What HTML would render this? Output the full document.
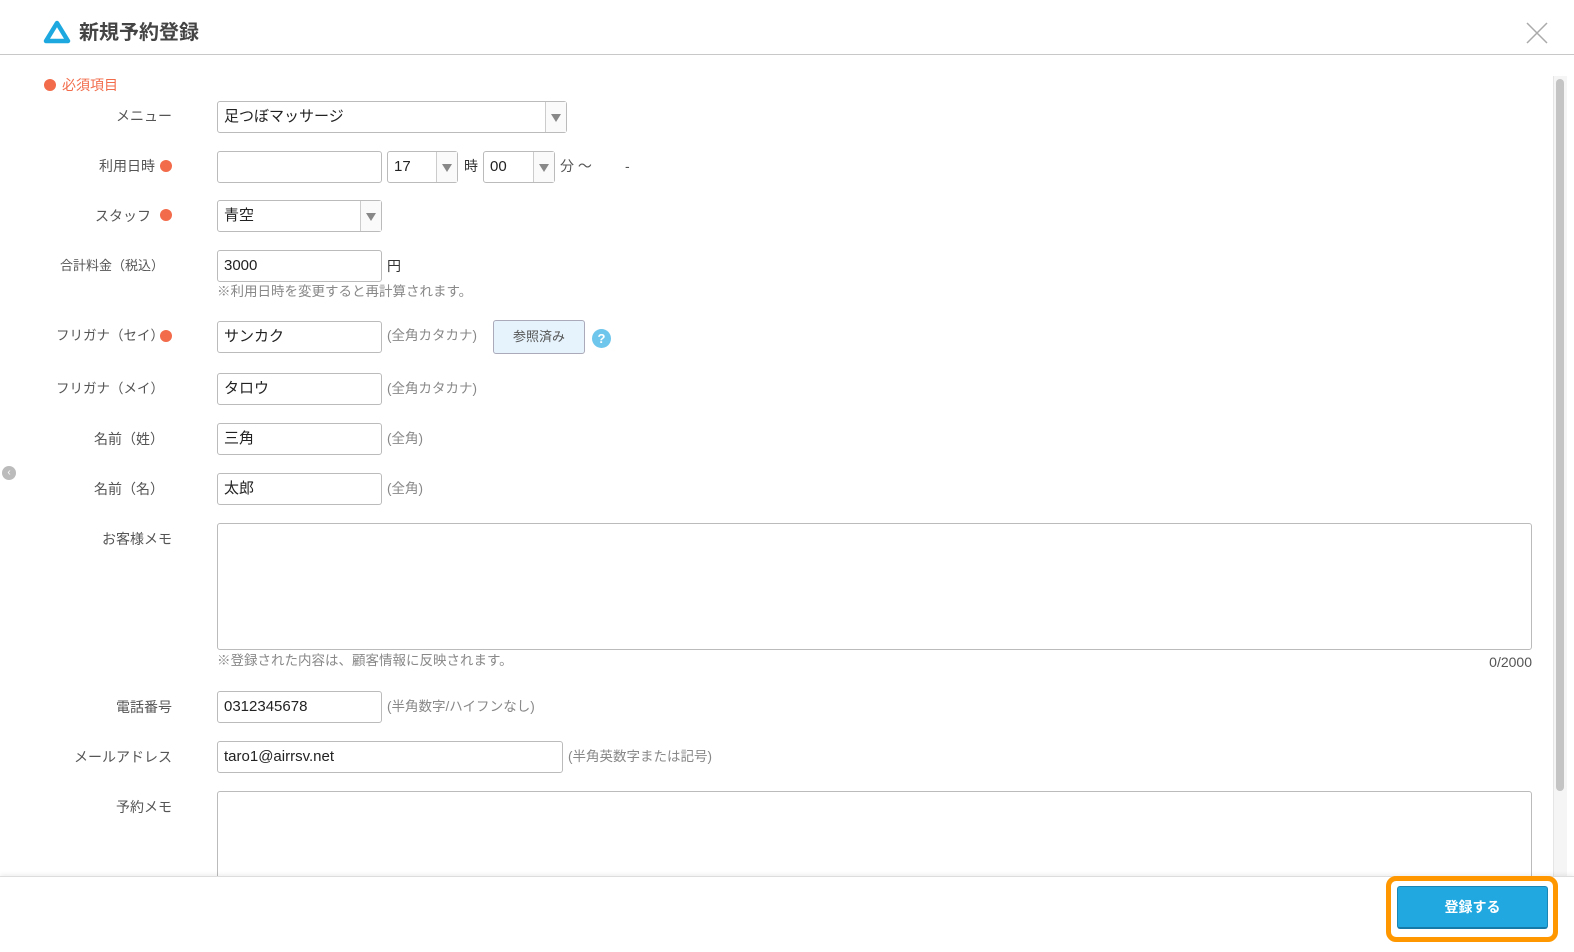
<!DOCTYPE html>
<html><head><meta charset="utf-8"><style>
*{box-sizing:border-box;margin:0;padding:0}
body{width:1574px;height:952px;background:#fff;position:relative;overflow:hidden;font-family:"Liberation Sans","Noto Sans CJK JP",sans-serif;color:#333;font-size:14px}
.a{position:absolute;white-space:nowrap}
.lbl{position:absolute;text-align:right;font-size:14px;color:#555;line-height:20px;white-space:nowrap}
.in{position:absolute;border:1px solid #bbb;border-radius:3px;background:#fff;height:32px;padding-left:6px;line-height:30px;font-size:15px;color:#222}
.sel::after{content:"";position:absolute;right:0;top:0;bottom:0;width:20px;border-left:1px solid #ccc;background:#fafafa}
.sel i{position:absolute;right:5px;top:12px;width:0;height:0;border-left:5px solid transparent;border-right:5px solid transparent;border-top:8px solid #888;z-index:2}
.dot{position:absolute;width:12px;height:12px;border-radius:50%;background:#f26b4a}
.note{position:absolute;font-size:13.5px;color:#888;line-height:20px;white-space:nowrap}
</style></head><body>
<svg class="a" style="left:43px;top:20px" width="28" height="26" viewBox="0 0 28 26"><path d="M14 3 L25 21 H3 Z" fill="none" stroke="#1ea8e0" stroke-width="4.5" stroke-linejoin="round"/></svg>
<div class="a" style="left:79px;top:19px;font-size:20px;font-weight:bold;color:#444;line-height:28px">新規予約登録</div>
<svg class="a" style="left:1526px;top:22px" width="22" height="22"><path d="M1 1L21 21M21 1L1 21" stroke="#aaa" stroke-width="1.5"/></svg>
<div class="a" style="left:0;top:54px;width:1574px;height:1px;background:#c8c8c8"></div>
<div class="a" style="left:1553px;top:76px;width:14px;height:800px;background:#f5f5f5;border-left:1px solid #e5e5e5"></div>
<div class="a" style="left:1556px;top:79px;width:8px;height:712px;background:#c4c4c4;border-radius:4px"></div>
<div class="dot" style="left:44px;top:79px"></div>
<div class="a" style="left:62px;top:75px;color:#f26b4a;font-size:14px;line-height:20px">必須項目</div>
<div class="a" style="left:2px;top:466px;width:14px;height:14px;border-radius:50%;background:#bbb;color:#fff;font-size:10px;text-align:center;line-height:14px">&lsaquo;</div>

<div class="lbl" style="right:1402px;top:106px">メニュー</div>
<div class="in sel" style="left:217px;top:101px;width:350px">足つぼマッサージ<i></i></div>

<div class="lbl" style="right:1419px;top:156px">利用日時</div><div class="dot" style="left:160px;top:160px"></div>
<div class="in" style="left:217px;top:151px;width:165px"></div>
<div class="in sel" style="left:387px;top:151px;width:71px">17<i></i></div>
<div class="a" style="left:464px;top:156px;line-height:20px">時</div>
<div class="in sel" style="left:483px;top:151px;width:72px">00<i></i></div>
<div class="a" style="left:560px;top:156px;line-height:20px;color:#555">分 〜</div>
<div class="a" style="left:625px;top:156px;line-height:20px;color:#555">-</div>

<div class="lbl" style="right:1423px;top:206px">スタッフ</div><div class="dot" style="left:160px;top:209px"></div>
<div class="in sel" style="left:217px;top:200px;width:165px">青空<i></i></div>

<div class="lbl" style="right:1410px;top:256px;font-size:13px">合計料金（税込）</div>
<div class="in" style="left:217px;top:250px;width:165px">3000</div>
<div class="a" style="left:387px;top:256px;line-height:20px">円</div>
<div class="note" style="left:217px;top:282px">※利用日時を変更すると再計算されます。</div>

<div class="lbl" style="right:1410px;top:326px;font-size:13.5px">フリガナ（セイ）</div><div class="dot" style="left:160px;top:330px"></div>
<div class="in" style="left:217px;top:321px;width:165px">サンカク</div>
<div class="note" style="left:387px;top:326px">(全角カタカナ)</div>
<div class="a" style="left:493px;top:320px;width:92px;height:34px;border:1px solid #aab;border-radius:3px;background:#e6f3fc;text-align:center;line-height:32px;font-size:13px;color:#555">参照済み</div>
<div class="a" style="left:592px;top:329px;width:19px;height:19px;border-radius:50%;background:#6ec6ec;color:#fff;font-weight:bold;font-size:13px;text-align:center;line-height:19px">?</div>

<div class="lbl" style="right:1410px;top:379px;font-size:13.5px">フリガナ（メイ）</div>
<div class="in" style="left:217px;top:373px;width:165px">タロウ</div>
<div class="note" style="left:387px;top:379px">(全角カタカナ)</div>

<div class="lbl" style="right:1410px;top:429px">名前（姓）</div>
<div class="in" style="left:217px;top:423px;width:165px">三角</div>
<div class="note" style="left:387px;top:429px">(全角)</div>

<div class="lbl" style="right:1410px;top:479px">名前（名）</div>
<div class="in" style="left:217px;top:473px;width:165px">太郎</div>
<div class="note" style="left:387px;top:479px">(全角)</div>

<div class="lbl" style="right:1402px;top:529px">お客様メモ</div>
<div class="in" style="left:217px;top:523px;width:1315px;height:127px"></div>
<div class="note" style="left:217px;top:651px">※登録された内容は、顧客情報に反映されます。</div>
<div class="a" style="right:42px;top:652px;font-size:14px;color:#555;line-height:20px">0/2000</div>

<div class="lbl" style="right:1402px;top:697px">電話番号</div>
<div class="in" style="left:217px;top:691px;width:165px">0312345678</div>
<div class="note" style="left:387px;top:697px">(半角数字/ハイフンなし)</div>

<div class="lbl" style="right:1402px;top:747px">メールアドレス</div>
<div class="in" style="left:217px;top:741px;width:346px">taro1@airrsv.net</div>
<div class="note" style="left:568px;top:747px">(半角英数字または記号)</div>

<div class="lbl" style="right:1402px;top:797px">予約メモ</div>
<div class="in" style="left:217px;top:791px;width:1315px;height:100px"></div>

<div class="a" style="left:0;top:876px;width:1574px;height:76px;background:#fff;border-top:1px solid #ddd;box-shadow:0 -2px 4px rgba(0,0,0,.06)"></div>
<div class="a" style="left:1386px;top:876px;width:172px;height:66px;border:5px solid #ff9800;border-radius:10px"></div>
<div class="a" style="left:1397px;top:886px;width:151px;height:43px;background:#21a8e0;border:1px solid #1a86b6;border-bottom:2px solid #167aa8;border-radius:3px;color:#fff;font-weight:bold;font-size:14px;text-align:center;line-height:40px">登録する</div>
</body></html>
